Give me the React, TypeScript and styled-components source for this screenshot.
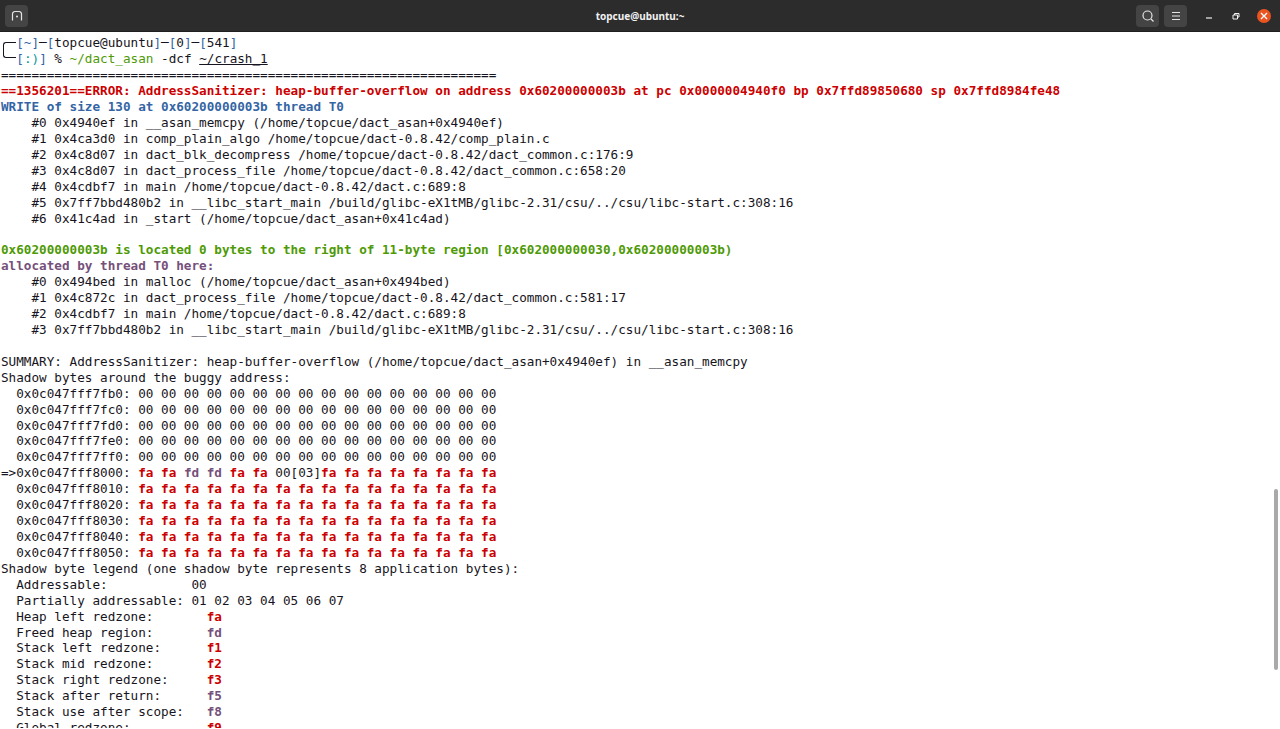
import React from "react";
import styled, { createGlobalStyle } from "styled-components";

const Global = createGlobalStyle`
  html, body { margin: 0; padding: 0; height: 100%; background: #fff; overflow: hidden; }
  #root { height: 100%; }
`;

const Window = styled.div`
  width: 1280px;
  height: 729px;
  display: flex;
  flex-direction: column;
  overflow: hidden;
  background: #fff;
`;

const TitleBar = styled.header`
  flex: 0 0 32px;
  height: 32px;
  box-sizing: border-box;
  display: grid;
  grid-template-columns: 1fr auto 1fr;
  align-items: center;
  background: #2c2c2c;
  border-bottom: 1px solid #1f1f1f;
  padding: 0 5px;
`;

const HeaderButton = styled.div`
  width: 23px;
  height: 22px;
  border-radius: 4px;
  background: #444444;
  display: flex;
  align-items: center;
  justify-content: center;
`;

const Title = styled.div`
  color: #f0f0f0;
  font: 700 10px "Noto Sans", "Open Sans", sans-serif;
`;

const Controls = styled.div`
  display: flex;
  align-items: center;
  justify-content: flex-end;
  gap: 5px;
`;

const WindowButton = styled.div<{ $ml: number }>`
  width: 22px;
  height: 22px;
  margin-left: ${(p) => p.$ml}px;
  display: flex;
  align-items: center;
  justify-content: center;
`;

const CloseButton = styled.div`
  width: 14px;
  height: 14px;
  margin: 0 4px 0 5px;
  border-radius: 50%;
  background: #e95420;
  display: flex;
  align-items: center;
  justify-content: center;
`;

const Body = styled.main`
  flex: 1;
  min-height: 0;
  position: relative;
  overflow: hidden;
  padding-top: 3.4px;
  margin-bottom: 1px;
`;

const Line = styled.div`
  height: 15.93px;
  line-height: 15.93px;
  white-space: pre;
  font-family: "DejaVu Sans Mono", monospace;
  font-size: 12.67px;
  color: #171421;
  padding-left: 1px;
`;

const Ink = styled.span<{ $c?: string; $b?: boolean; $u?: boolean }>`
  color: ${(p) => p.$c ?? "inherit"};
  font-weight: ${(p) => (p.$b ? 700 : 400)};
  text-decoration: ${(p) => (p.$u ? "underline" : "none")};
`;

const PromptBracket = styled.div`
  position: absolute;
  left: 3px;
  top: 10px;
  width: 12px;
  height: 14px;
  border: 1.5px solid #171421;
  border-right: none;
  border-radius: 3px 0 0 3px;
`;

const Thumb = styled.div`
  position: absolute;
  top: 457px;
  right: 2px;
  width: 4px;
  height: 181px;
  border-radius: 2px;
  background: #a9a9a9;
`;

const RED = "#cc0000";
const BLUE = "#3465a4";
const GREEN = "#4e9a06";
const PURPLE = "#75507b";
const TEAL = "#06989a";

const R = ({ children }: { children: React.ReactNode }) => <Ink $c={RED} $b>{children}</Ink>;
const P = ({ children }: { children: React.ReactNode }) => <Ink $c={PURPLE} $b>{children}</Ink>;

const zeros = Array(16).fill("00").join(" ");
const fas = Array(16).fill("fa").join(" ");

const lines: React.ReactNode[] = [
  <>
    {"  "}
    <Ink $c={BLUE}>[~]</Ink>─<Ink $c={BLUE}>[</Ink>topcue@ubuntu<Ink $c={BLUE}>]</Ink>─<Ink $c={BLUE}>[</Ink>0<Ink $c={BLUE}>]</Ink>─<Ink $c={BLUE}>[</Ink>541<Ink $c={BLUE}>]</Ink>
  </>,
  <>
    {"  "}
    <Ink $c={BLUE}>[</Ink><Ink $c={TEAL}>:)</Ink><Ink $c={BLUE}>]</Ink> % <Ink $c={GREEN}>~/dact_asan</Ink> -dcf <Ink $u>~/crash_1</Ink>
  </>,
  "=".repeat(65),
  <R>==1356201==ERROR: AddressSanitizer: heap-buffer-overflow on address 0x60200000003b at pc 0x0000004940f0 bp 0x7ffd89850680 sp 0x7ffd8984fe48</R>,
  <Ink $c={BLUE} $b>WRITE of size 130 at 0x60200000003b thread T0</Ink>,
  "    #0 0x4940ef in __asan_memcpy (/home/topcue/dact_asan+0x4940ef)",
  "    #1 0x4ca3d0 in comp_plain_algo /home/topcue/dact-0.8.42/comp_plain.c",
  "    #2 0x4c8d07 in dact_blk_decompress /home/topcue/dact-0.8.42/dact_common.c:176:9",
  "    #3 0x4c8d07 in dact_process_file /home/topcue/dact-0.8.42/dact_common.c:658:20",
  "    #4 0x4cdbf7 in main /home/topcue/dact-0.8.42/dact.c:689:8",
  "    #5 0x7ff7bbd480b2 in __libc_start_main /build/glibc-eX1tMB/glibc-2.31/csu/../csu/libc-start.c:308:16",
  "    #6 0x41c4ad in _start (/home/topcue/dact_asan+0x41c4ad)",
  "",
  <Ink $c={GREEN} $b>0x60200000003b is located 0 bytes to the right of 11-byte region [0x602000000030,0x60200000003b)</Ink>,
  <P>allocated by thread T0 here:</P>,
  "    #0 0x494bed in malloc (/home/topcue/dact_asan+0x494bed)",
  "    #1 0x4c872c in dact_process_file /home/topcue/dact-0.8.42/dact_common.c:581:17",
  "    #2 0x4cdbf7 in main /home/topcue/dact-0.8.42/dact.c:689:8",
  "    #3 0x7ff7bbd480b2 in __libc_start_main /build/glibc-eX1tMB/glibc-2.31/csu/../csu/libc-start.c:308:16",
  "",
  "SUMMARY: AddressSanitizer: heap-buffer-overflow (/home/topcue/dact_asan+0x4940ef) in __asan_memcpy",
  "Shadow bytes around the buggy address:",
  `  0x0c047fff7fb0: ${zeros}`,
  `  0x0c047fff7fc0: ${zeros}`,
  `  0x0c047fff7fd0: ${zeros}`,
  `  0x0c047fff7fe0: ${zeros}`,
  `  0x0c047fff7ff0: ${zeros}`,
  <>
    =&gt;0x0c047fff8000: <R>fa fa </R><P>fd fd </P><R>fa fa </R>00[03]<R>fa fa fa fa fa fa fa fa</R>
  </>,
  <>  0x0c047fff8010: <R>{fas}</R></>,
  <>  0x0c047fff8020: <R>{fas}</R></>,
  <>  0x0c047fff8030: <R>{fas}</R></>,
  <>  0x0c047fff8040: <R>{fas}</R></>,
  <>  0x0c047fff8050: <R>{fas}</R></>,
  "Shadow byte legend (one shadow byte represents 8 application bytes):",
  "  Addressable:           00",
  "  Partially addressable: 01 02 03 04 05 06 07 ",
  <>  Heap left redzone:       <R>fa</R></>,
  <>  Freed heap region:       <P>fd</P></>,
  <>  Stack left redzone:      <R>f1</R></>,
  <>  Stack mid redzone:       <R>f2</R></>,
  <>  Stack right redzone:     <R>f3</R></>,
  <>  Stack after return:      <P>f5</P></>,
  <>  Stack use after scope:   <P>f8</P></>,
  <>  Global redzone:          <R>f9</R></>,
];

export default function App() {
  return (
    <Window>
      <Global />
      <TitleBar>
        <HeaderButton>
          <svg width="12" height="12" viewBox="0 0 12 12" fill="none" stroke="#e6e6e6" strokeWidth="1.2">
            <path d="M1.500 10.500V4a2.500 2.500 0 0 1 2.500-2.500h4A2.500 2.500 0 0 1 10.500 4v6.500" />
            <circle cx="6" cy="6.500" r="1" fill="#e6e6e6" stroke="none" />
          </svg>
        </HeaderButton>
        <Title>topcue@ubuntu:~</Title>
        <Controls>
          <HeaderButton>
            <svg width="14" height="14" viewBox="0 0 14 14" fill="none" stroke="#e6e6e6" strokeWidth="1.200">
              <circle cx="6.500" cy="6.500" r="4.500" />
              <path d="M10 10l2.500 2.500" />
            </svg>
          </HeaderButton>
          <HeaderButton>
            <svg width="12" height="12" viewBox="0 0 12 12" fill="none" stroke="#e6e6e6" strokeWidth="1.100">
              <path d="M2 2.500h8M2 6h8M2 9.500h8" />
            </svg>
          </HeaderButton>
          <WindowButton $ml={6}>
            <svg width="10" height="10" viewBox="0 0 10 10" fill="none" stroke="#f0f0f0" strokeWidth="1.200">
              <path d="M2 7h6" />
            </svg>
          </WindowButton>
          <WindowButton $ml={0}>
            <svg width="10" height="10" viewBox="0 0 10 10" fill="none" stroke="#f0f0f0" strokeWidth="1">
              <path d="M2 4h4.500v4H2z M3.500 4V2.500H8v3.500H6.500" />
            </svg>
          </WindowButton>
          <CloseButton>
            <svg width="8" height="8" viewBox="0 0 8 8" fill="none" stroke="#fff" strokeWidth="1.300">
              <path d="M1 1l6 6M7 1L1 7" />
            </svg>
          </CloseButton>
        </Controls>
      </TitleBar>
      <Body>
        {lines.map((l, i) => (
          <Line key={i}>{l === "" ? " " : l}</Line>
        ))}
        <PromptBracket />
        <Thumb />
      </Body>
    </Window>
  );
}
